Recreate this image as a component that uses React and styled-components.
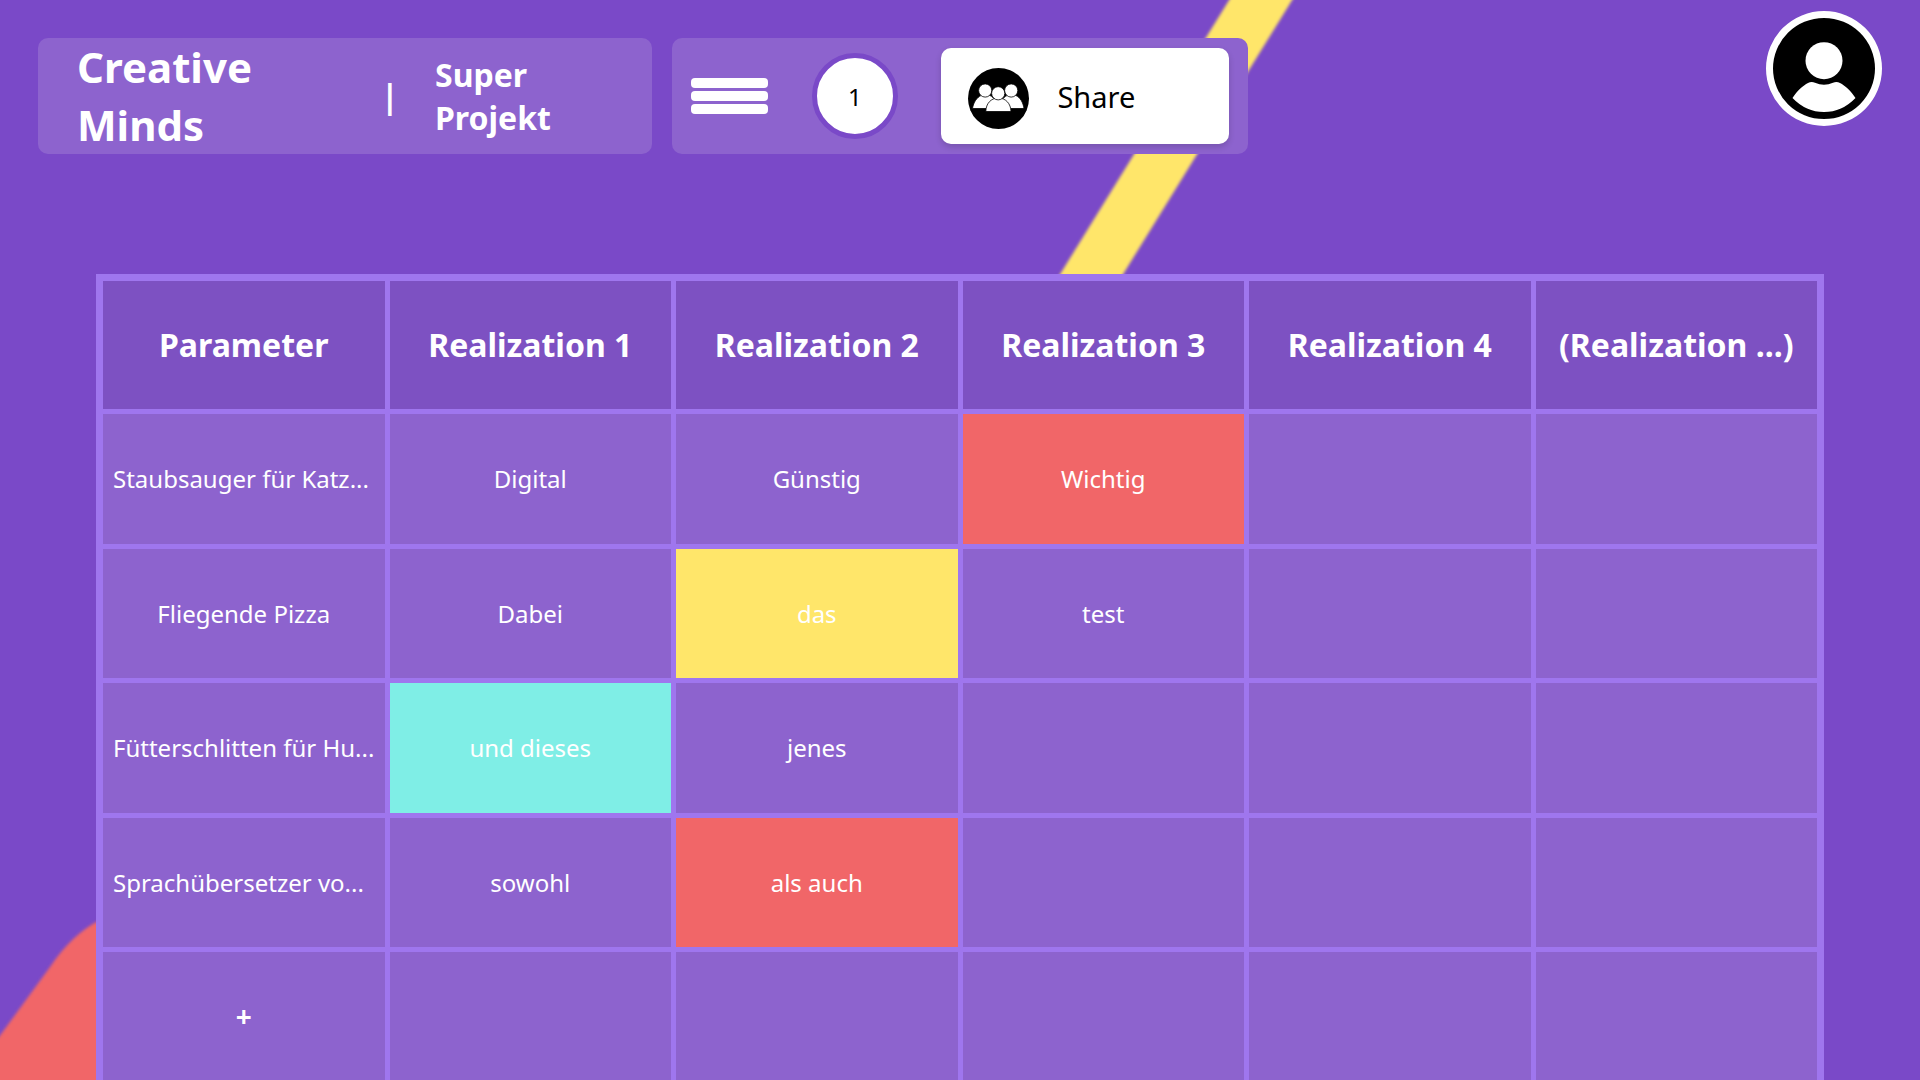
import React from "react";
import styled, { createGlobalStyle } from "styled-components";

const color = {
  page: "#7a49c8",
  panel: "#8d63ce",
  head: "#7d51c2",
  line: "#9f76ee",
  coral: "#f16668",
  yellow: "#ffe66a",
  teal: "#7feee6",
};

const GlobalStyle = createGlobalStyle`
  *, *::before, *::after { box-sizing: border-box; }
  body {
    margin: 0;
    background: ${color.page};
    color: #fff;
    font-family: "Noto Sans", "Open Sans", sans-serif;
  }
  button { font: inherit; cursor: pointer; }
`;

const Page = styled.div`
  position: relative;
  isolation: isolate;
  height: 100vh;
  overflow: hidden;
`;

const Backdrop = styled.svg`
  position: absolute;
  inset: 0;
  z-index: -1;
  width: 100%;
  height: 100%;
`;

const Header = styled.header`
  display: flex;
  align-items: flex-start;
  gap: 20px;
  padding: 38px 38px 0;
`;

const Panel = styled.div`
  display: flex;
  align-items: center;
  height: 116px;
  border-radius: 10px;
  background: ${color.panel};
`;

const TitlePanel = styled(Panel)`
  width: 32vw;
  padding: 0 39px;
`;

const Title = styled.h1`
  flex: 0 0 304px;
  margin: 0;
  padding-right: 100px;
  font-size: 42px;
  line-height: 58px;
`;

const Divider = styled.span`
  flex: 0 0 54px;
  font-size: 32px;
  font-weight: 700;
  line-height: 44px;
`;

const Project = styled.h2`
  width: 160px;
  margin: 0;
  font-size: 32px;
  line-height: 43px;
`;

const ToolPanel = styled(Panel)`
  width: 30vw;
  justify-content: space-between;
  padding: 0 19px;
`;

const MenuButton = styled.button`
  display: grid;
  gap: 3px;
  width: 77px;
  padding: 0;
  border: 0;
  background: none;
`;

const MenuBar = styled.span`
  height: 10px;
  border-radius: 4px;
  background: #fff;
`;

const CountButton = styled.button`
  width: 86px;
  height: 86px;
  padding: 0;
  border: 5px solid ${color.page};
  border-radius: 50%;
  background: #fff;
  color: #000;
  font-size: 24px;
`;

const ShareButton = styled.button`
  display: flex;
  align-items: center;
  gap: 28px;
  width: 15vw;
  height: 96px;
  padding: 0 27px;
  border: 0;
  border-radius: 10px;
  background: #fff;
  color: #000;
  font-size: 29px;
  box-shadow: 0 3px 6px rgba(0, 0, 0, 0.16);

  svg { margin-top: 4px; }
`;

const AvatarButton = styled.button`
  width: 116px;
  height: 115px;
  margin: -27px 0 0 auto;
  padding: 0;
  border: 7px solid #fff;
  border-radius: 50%;
  background: #000;

  svg { display: block; }
`;

const Board = styled.table`
  width: 90%;
  margin: 120px auto 0;
  table-layout: fixed;
  border: 2px solid ${color.line};
  border-collapse: separate;
  border-spacing: 5px;
  background: ${color.line};
`;

const HeadCell = styled.th`
  height: 128px;
  padding: 0 10px 2px;
  background: ${color.head};
  font-size: 32px;
  white-space: nowrap;
`;

const Cell = styled.td`
  height: 12vh;
  padding: 0 10px;
  overflow: hidden;
  background: ${(p) => color[p.$tone] || color.panel};
  font-size: 24px;
  text-align: ${(p) => (p.$long ? "left" : "center")};
  text-overflow: ellipsis;
  white-space: nowrap;
`;

const AddButton = styled.button`
  width: 100%;
  height: 100%;
  padding: 0 0 2px;
  border: 0;
  background: none;
  color: #fff;
  font-size: 28px;
  font-weight: 700;
`;

const columns = ["Parameter", "Realization 1", "Realization 2", "Realization 3", "Realization 4", "(Realization ...)"];

const rows = [
  [{ text: "Staubsauger für Katz...", long: true }, { text: "Digital" }, { text: "Günstig" }, { text: "Wichtig", tone: "coral" }, {}, {}],
  [{ text: "Fliegende Pizza" }, { text: "Dabei" }, { text: "das", tone: "yellow" }, { text: "test" }, {}, {}],
  [{ text: "Fütterschlitten für Hu...", long: true }, { text: "und dieses", tone: "teal" }, { text: "jenes" }, {}, {}, {}],
  [{ text: "Sprachübersetzer vo...", long: true }, { text: "sowohl" }, { text: "als auch", tone: "coral" }, {}, {}, {}],
];

function GroupIcon() {
  return (
    <svg width="61" height="61" viewBox="0 0 61 61" aria-hidden="true">
      <circle cx="30.5" cy="30.5" r="30.5" fill="#000" />
      <g fill="#fff" stroke="#000" strokeWidth="0.8">
        <path d="M4.500 40.500C5.500 34 9 29.500 13 27.500H22C26 29.500 29.500 34 30.500 40.500Z" />
        <path d="M30.500 40.500C31.500 34 35 29.500 39 27.500H48C52 29.500 55 34 56 40.500Z" />
        <circle cx="17.2" cy="22.5" r="6.6" />
        <circle cx="43.2" cy="22.5" r="6.6" />
        <path d="M17.800 43.500C18 35.500 23 30 30.300 30S42.800 35.500 43 43.500Z" />
        <circle cx="30.2" cy="25.3" r="6.6" />
      </g>
    </svg>
  );
}

function PersonIcon() {
  return (
    <svg width="102" height="101" viewBox="0 0 102 101" aria-hidden="true">
      <circle cx="51" cy="42.7" r="18.5" fill="#fff" />
      <path
        fill="#fff"
        d="M19.500 80C24 73 30 67.500 35 65Q38.500 63.200 42 64.800Q51 68.600 60 64.800Q63.500 63.200 67 65C72 67.500 78 73 82.500 80Q69 94 51 94T19.500 80Z"
      />
    </svg>
  );
}

export default function App() {
  return (
    <>
      <GlobalStyle />
      <Page>
        <Backdrop viewBox="0 0 1920 1080" preserveAspectRatio="xMidYMid slice" aria-hidden="true">
          <defs>
            <filter id="soft" x="-5%" y="-5%" width="110%" height="110%">
              <feGaussianBlur stdDeviation="1.8" />
            </filter>
          </defs>
          <g filter="url(#soft)">
            <path fill={color.yellow} d="M1241.500-20H1304.500L1103.500 306H1040.500Z" />
            <path fill={color.coral} d="M-20 1063L50 967Q72 934 100 920L180 900V1110H-20Z" />
          </g>
        </Backdrop>
        <Header>
          <TitlePanel>
            <Title>Creative Minds</Title>
            <Divider>|</Divider>
            <Project>Super Projekt</Project>
          </TitlePanel>
          <ToolPanel>
            <MenuButton type="button" aria-label="Menu">
              <MenuBar />
              <MenuBar />
              <MenuBar />
            </MenuButton>
            <CountButton type="button">1</CountButton>
            <ShareButton type="button">
              <GroupIcon />
              Share
            </ShareButton>
          </ToolPanel>
          <AvatarButton type="button" aria-label="Profile">
            <PersonIcon />
          </AvatarButton>
        </Header>
        <main>
          <Board>
            <thead>
              <tr>
                {columns.map((name) => (
                  <HeadCell key={name} scope="col">{name}</HeadCell>
                ))}
              </tr>
            </thead>
            <tbody>
              {rows.map((row) => (
                <tr key={row[0].text}>
                  {row.map((cell, i) => (
                    <Cell key={i} $tone={cell.tone} $long={cell.long}>{cell.text}</Cell>
                  ))}
                </tr>
              ))}
              <tr>
                <Cell>
                  <AddButton type="button" aria-label="Add parameter">+</AddButton>
                </Cell>
                {columns.slice(1).map((name) => (
                  <Cell key={name} />
                ))}
              </tr>
            </tbody>
          </Board>
        </main>
      </Page>
    </>
  );
}
